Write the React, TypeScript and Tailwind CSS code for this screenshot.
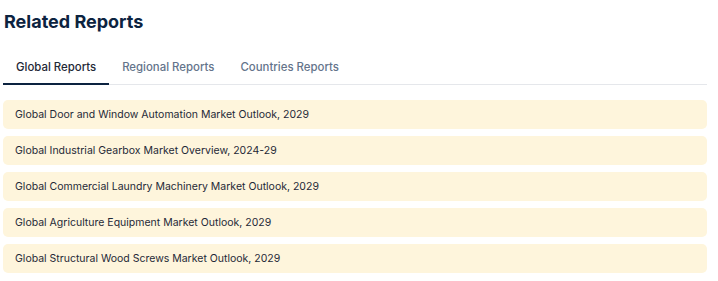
import { useState } from "react";

const tabs = ["Global Reports", "Regional Reports", "Countries Reports"];

const reports = [
  "Global Door and Window Automation Market Outlook, 2029",
  "Global Industrial Gearbox Market Overview, 2024-29",
  "Global Commercial Laundry Machinery Market Outlook, 2029",
  "Global Agriculture Equipment Market Outlook, 2029",
  "Global Structural Wood Screws Market Outlook, 2029",
];

export default function App() {
  const [active, setActive] = useState(0);

  return (
    <div className="min-h-[281px] bg-white pl-[3px] pr-[11px] pt-[11px] font-['Inter',sans-serif]">
      <h2 className="pl-px text-[18px] font-bold leading-[22px] text-[#0c2340]">Related Reports</h2>

      <div className="mt-[20px] flex border-b border-[#e5e7eb]">
        {tabs.map((tab, i) => (
          <button
            key={tab}
            onClick={() => setActive(i)}
            className={
              i === active
                ? "-mb-px border-b-2 border-[#0c2340] px-[13px] pb-[8px] pt-[6px] text-[11.4px] font-medium leading-[16px] text-[#1f2937]"
                : "-mb-px border-b-2 border-transparent px-[13px] pb-[8px] pt-[6px] text-[11.4px] font-medium leading-[16px] text-[#64748b]"
            }
          >
            {tab}
          </button>
        ))}
      </div>

      <div className="mt-[15px] flex flex-col gap-[7px]">
        {reports.map((r) => (
          <a
            key={r}
            href="#"
            className="flex h-[29px] items-center rounded-[5px] bg-[#fef5dc] px-[12px] text-[10.5px] text-[#1f2937]"
          >
            {r}
          </a>
        ))}
      </div>
    </div>
  );
}
